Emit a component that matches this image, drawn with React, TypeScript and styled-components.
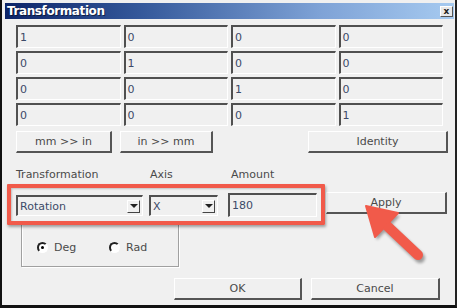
import React from "react";
import styled, { createGlobalStyle } from "styled-components";

const Global = createGlobalStyle`
  html, body { margin: 0; padding: 0; background: #f0f0f0; }
  body { font-family: "DejaVu Sans", "Liberation Sans", sans-serif; }
`;

const Window = styled.div`
  position: relative;
  width: 457px;
  height: 308px;
  box-sizing: border-box;
  background: #f0f0f0;
  border-left: 2px solid #111;
  border-right: 2px solid #222;
  border-bottom: 3px solid #111;
  padding-top: 3px;
  font-family: "DejaVu Sans", "Liberation Sans", sans-serif;
  font-size: 11px;
  color: #4a4a4a;
  overflow: hidden;
`;

const TitleBar = styled.div`
  margin: 0 1px 0 3px;
  height: 16px;
  display: flex;
  align-items: center;
  justify-content: space-between;
  padding: 0 1px 0 2px;
  background: linear-gradient(to right, #0c2468 0%, #34589a 30%, #7ea2d6 70%, #a6caf0 100%);
`;

const TitleText = styled.span`
  color: #fff;
  font-weight: bold;
  font-size: 12px;
  letter-spacing: -0.4px;
  text-shadow: 1px 1px 0 rgba(0, 0, 0, 0.5);
`;

const CloseBtn = styled.div`
  width: 13px;
  height: 11px;
  box-sizing: border-box;
  background: #e8e8e8;
  border-top: 1px solid #fff;
  border-left: 1px solid #fff;
  border-right: 1px solid #555;
  border-bottom: 1px solid #555;
  display: flex;
  align-items: center;
  justify-content: center;
  font-size: 9px;
  font-weight: bold;
  color: #222;
  line-height: 1;
`;

const Body = styled.div`
  padding-left: 14px;
  display: flex;
  flex-direction: column;
`;

const Matrix = styled.div`
  margin-top: 6px;
  width: 427px;
  display: grid;
  grid-template-columns: repeat(4, 1fr);
  grid-auto-rows: 23px;
  column-gap: 3px;
  row-gap: 3px;
`;

const Field = styled.div<{ $w?: number; $h?: number; $mt?: number; $ml?: number }>`
  box-sizing: border-box;
  ${(p) => (p.$w ? `width: ${p.$w}px;` : "")}
  ${(p) => (p.$h ? `height: ${p.$h}px;` : "")}
  margin-top: ${(p) => p.$mt ?? 0}px;
  margin-left: ${(p) => p.$ml ?? 0}px;
  background: #f0f0f0;
  border-top: 2px solid #505050;
  border-left: 2px solid #505050;
  border-bottom: 1px solid #fff;
  border-right: 1px solid #fff;
  display: flex;
  align-items: center;
  padding-left: 2px;
  color: #3c4a68;
  font-size: 11px;
`;

const Row = styled.div<{ $mt: number }>`
  display: flex;
  align-items: flex-start;
  margin-top: ${(p) => p.$mt}px;
`;

const Button = styled.div<{ $w: number; $ml?: number; $mt?: number }>`
  box-sizing: border-box;
  width: ${(p) => p.$w}px;
  height: 22px;
  margin-left: ${(p) => p.$ml ?? 0}px;
  margin-top: ${(p) => p.$mt ?? 0}px;
  background: #f0f0f0;
  border-top: 1px solid #fff;
  border-left: 1px solid #fff;
  border-right: 2px solid #555;
  border-bottom: 2px solid #555;
  display: flex;
  align-items: center;
  justify-content: center;
  color: #4a4a4a;
  font-size: 11px;
`;

const Label = styled.span<{ $w: number }>`
  width: ${(p) => p.$w}px;
  line-height: 14px;
  font-size: 11px;
  color: #4a4a4a;
`;

const Combo = styled.div<{ $w: number; $ml?: number }>`
  box-sizing: border-box;
  width: ${(p) => p.$w}px;
  height: 21px;
  margin-top: 3px;
  margin-left: ${(p) => p.$ml ?? 0}px;
  background: #f0f0f0;
  border-top: 2px solid #505050;
  border-left: 2px solid #505050;
  border-bottom: 1px solid #fff;
  border-right: 1px solid #fff;
  display: flex;
  align-items: center;
  justify-content: space-between;
  padding: 0 2px 0 2px;
  color: #3c4a68;
`;

const DropBtn = styled.div`
  box-sizing: border-box;
  width: 13px;
  height: 13px;
  background: #f0f0f0;
  border-top: 1px solid #fff;
  border-left: 1px solid #fff;
  border-right: 1px solid #444;
  border-bottom: 1px solid #444;
  display: flex;
  align-items: center;
  justify-content: center;
  &::after {
    content: "";
    border-left: 4px solid transparent;
    border-right: 4px solid transparent;
    border-top: 4px solid #222;
  }
`;

const Group = styled.div`
  box-sizing: border-box;
  margin-top: 6px;
  margin-left: 5px;
  width: 158px;
  height: 44px;
  border: 1px solid #a0a0a0;
  box-shadow: inset 1px 1px 0 #fff, 1px 1px 0 #fff;
  display: flex;
  align-items: center;
  padding: 0 0 0 15px;
`;

const RadioItem = styled.label<{ $w: number }>`
  display: flex;
  align-items: center;
  width: ${(p) => p.$w}px;
  gap: 6px;
  margin-top: 4px;
  font-size: 11px;
  color: #4a4a4a;
`;

const RadioDot = styled.span<{ $on?: boolean }>`
  box-sizing: border-box;
  width: 11px;
  height: 11px;
  border-radius: 50%;
  background: #fff;
  border: 2px solid;
  border-color: #222 #fff #fff #222;
  display: flex;
  align-items: center;
  justify-content: center;
  &::after {
    content: "";
    width: 3px;
    height: 3px;
    border-radius: 50%;
    background: ${(p) => (p.$on ? "#000" : "transparent")};
  }
`;

const Highlight = styled.div`
  position: absolute;
  left: 5px;
  top: 184px;
  width: 318px;
  height: 41px;
  box-sizing: border-box;
  border: 4px solid #f15a4a;
  border-radius: 1px;
  box-shadow: 1px 2px 3px rgba(0, 0, 0, 0.35), inset 1px 1px 2px rgba(0, 0, 0, 0.2);
  pointer-events: none;
`;

const ArrowSvg = styled.svg`
  position: absolute;
  left: -2px;
  top: 0;
  width: 457px;
  height: 308px;
  pointer-events: none;
`;

export default function App() {
  const matrix = [
    ["1", "0", "0", "0"],
    ["0", "1", "0", "0"],
    ["0", "0", "1", "0"],
    ["0", "0", "0", "1"],
  ];
  return (
    <>
      <Global />
      <Window>
        <TitleBar>
          <TitleText>Transformation</TitleText>
          <CloseBtn>x</CloseBtn>
        </TitleBar>
        <Body>
          <Matrix>
            {matrix.flat().map((v, i) => (
              <Field key={i}>{v}</Field>
            ))}
          </Matrix>
          <Row $mt={5}>
            <Button $w={96}>mm &gt;&gt; in</Button>
            <Button $w={93} $ml={8}>in &gt;&gt; mm</Button>
            <Button $w={140} $ml={95}>Identity</Button>
          </Row>
          <Row $mt={15}>
            <Label $w={134}>Transformation</Label>
            <Label $w={81}>Axis</Label>
            <Label $w={80}>Amount</Label>
          </Row>
          <Row $mt={10}>
            <Combo $w={127}>
              <span>Rotation</span>
              <DropBtn />
            </Combo>
            <Combo $w={69} $ml={6}>
              <span>X</span>
              <DropBtn />
            </Combo>
            <Field $w={89} $h={24} $mt={1} $ml={10}>180</Field>
            <Button $w={121} $ml={9}>Apply</Button>
          </Row>
          <Group>
            <RadioItem $w={72}>
              <RadioDot $on />
              Deg
            </RadioItem>
            <RadioItem $w={60}>
              <RadioDot />
              Rad
            </RadioItem>
          </Group>
          <Row $mt={11}>
            <Button $w={128} $ml={158}>OK</Button>
            <Button $w={129} $ml={9}>Cancel</Button>
          </Row>
        </Body>
        <Highlight />
        <ArrowSvg viewBox="0 0 457 308">
          <defs>
            <filter id="sh" x="-20%" y="-20%" width="140%" height="140%">
              <feGaussianBlur stdDeviation="1.5" />
            </filter>
          </defs>
          <g transform="translate(2,3)" opacity="0.35" filter="url(#sh)">
            <line x1="418" y1="255" x2="384" y2="223" stroke="#000" strokeWidth="10" strokeLinecap="round" />
            <polygon points="366,206 398,213 375,237" fill="#000" />
          </g>
          <line x1="418" y1="255" x2="384" y2="223" stroke="#f15a4a" strokeWidth="10" strokeLinecap="round" />
          <polygon points="366,206 398,213 375,237" fill="#f15a4a" stroke="#f15a4a" strokeWidth="2" strokeLinejoin="round" />
        </ArrowSvg>
      </Window>
    </>
  );
}
